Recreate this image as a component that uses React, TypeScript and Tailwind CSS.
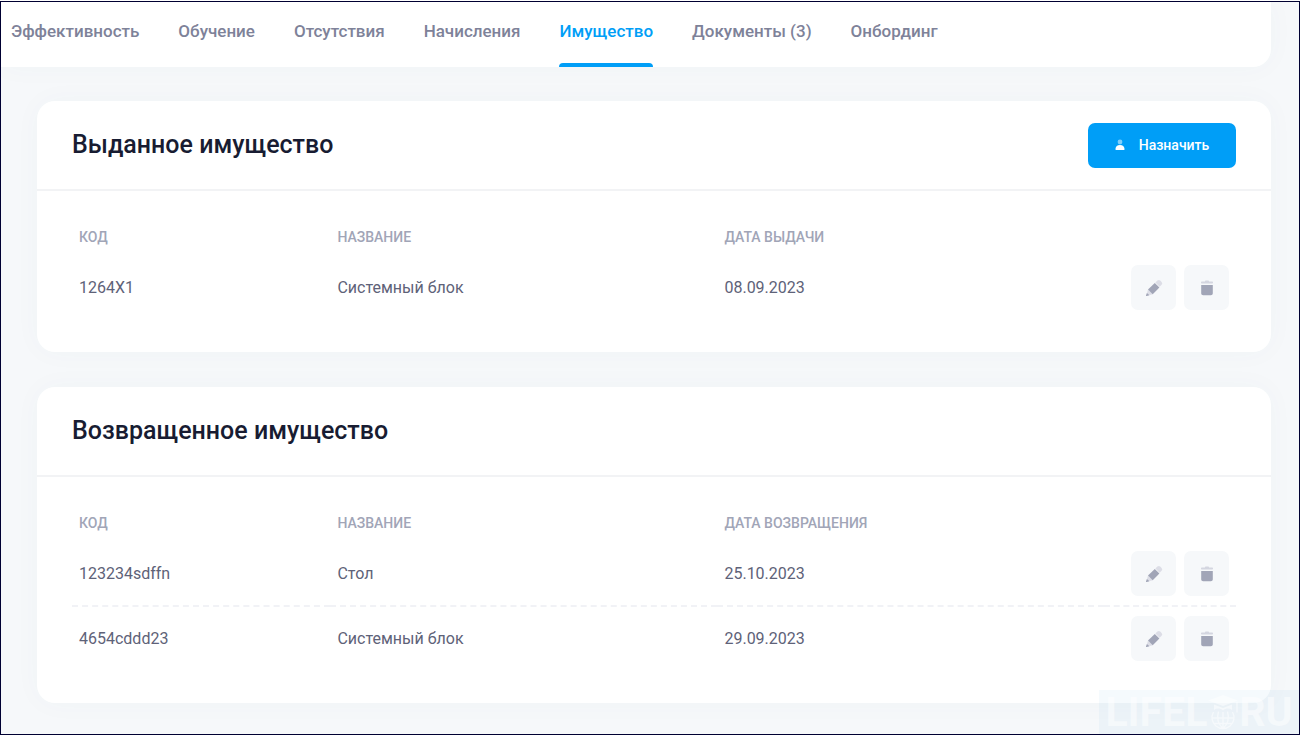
import clsx from 'clsx';

interface Asset {
  code: string;
  name: string;
  date: string;
}

const tabs = ['Эффективность', 'Обучение', 'Отсутствия', 'Начисления', 'Имущество', 'Документы (3)', 'Онбординг'];
const activeTab = 'Имущество';

const issued: Asset[] = [{ code: '1264X1', name: 'Системный блок', date: '08.09.2023' }];

const returned: Asset[] = [
  { code: '123234sdffn', name: 'Стол', date: '25.10.2023' },
  { code: '4654cddd23', name: 'Системный блок', date: '29.09.2023' },
];

function UserIcon() {
  return (
    <svg width="10" height="12" viewBox="0 0 10 12" fill="#fff" aria-hidden="true">
      <circle cx="5" cy="3" r="2.4" opacity="0.5" />
      <path d="M.4 10.200C.6 7.600 2.300 6 5 6s4.400 1.600 4.600 4.200c0 .5-.3.8-.8.8H1.200c-.5 0-.8-.3-.8-.8Z" />
    </svg>
  );
}

function PencilIcon() {
  return (
    <svg width="18" height="18" viewBox="0 0 18 18" aria-hidden="true">
      <path d="M10.400 3.600 12.400 1.600a2 2 0 0 1 2.800 0l1.400 1.400a2 2 0 0 1 0 2.800L14.600 7.800Z" fill="#dcdde6" />
      <path d="M3 10.500 1.200 16.900 7.700 15.200Z" fill="#dcdde6" />
      <path d="M9.800 3.900 14.400 8.500 7.700 15.200 3 10.500Z" fill="#a1a5b7" />
      <path d="M1.900 13.900 1 16.500c-.2.4.1.7.5.6l2.900-.9Z" fill="#a1a5b7" />
    </svg>
  );
}

function TrashIcon() {
  return (
    <svg width="14" height="16" viewBox="0 0 14 16" aria-hidden="true">
      <path d="M5 1.500C5 .9 5.400.5 6 .5h2c.6 0 1 .4 1 1h3c.6 0 1 .4 1 1s-.4 1-1 1H2c-.6 0-1-.4-1-1s.4-1 1-1Z" fill="#d4d6e0" />
      <path d="M1.200 5h11.600v8.200c0 1.200-.8 2-2 2H3.200c-1.200 0-2-.8-2-2Z" fill="#a1a5b7" />
    </svg>
  );
}

function IconButton({ label, children }: { label: string; children: React.ReactNode }) {
  return (
    <button type="button" aria-label={label} className="flex size-[45px] items-center justify-center rounded-[7px] bg-[#f6f8fa]">
      {children}
    </button>
  );
}

function AssetTable({ dateLabel, rows }: { dateLabel: string; rows: Asset[] }) {
  return (
    <table className="w-full table-fixed border-collapse text-left">
      <thead>
        <tr className="h-[38px] text-sm text-[#a1a5b7] uppercase">
          <th className="w-[22.2%] px-[7px] font-medium">Код</th>
          <th className="w-[33.25%] px-[7px] font-medium">Название</th>
          <th className="w-[33.25%] px-[7px] font-medium">{dateLabel}</th>
          <th />
        </tr>
      </thead>
      <tbody className="text-base text-[#5e6278]">
        {rows.map((row, i) => (
          <tr key={row.code} className={clsx(i < rows.length - 1 && 'border-b-2 border-dashed border-[#f1f2f6]')}>
            <td className="px-[7px] py-[9px]">{row.code}</td>
            <td className="px-[7px] py-[9px]">{row.name}</td>
            <td className="px-[7px] py-[9px]">{row.date}</td>
            <td className="px-[7px] py-[9px]">
              <div className="flex justify-end gap-2">
                <IconButton label="Редактировать"><PencilIcon /></IconButton>
                <IconButton label="Удалить"><TrashIcon /></IconButton>
              </div>
            </td>
          </tr>
        ))}
      </tbody>
    </table>
  );
}

function Card({ title, action, children }: { title: string; action?: React.ReactNode; children: React.ReactNode }) {
  return (
    <section className="rounded-[18px] bg-white shadow-[0_0_28px_rgba(60,90,120,0.03)]">
      <header className="flex h-[90px] items-center justify-between border-b-2 border-[#f2f3f5] px-[35px]">
        <h2 className="text-[25px] font-medium text-[#181c32]">{title}</h2>
        {action}
      </header>
      <div className="px-[35px] pt-[27px] pb-[33px]">{children}</div>
    </section>
  );
}

function Watermark() {
  return (
    <div className="absolute right-0 bottom-0 flex h-11 w-[200px] items-center justify-center bg-[#0080c0]/4 text-[41px] leading-none font-bold text-white/50">
      <span>LIFEL</span>
      <svg width="32" height="36" viewBox="0 0 32 36" fill="none" stroke="currentColor" strokeWidth="1.400" aria-hidden="true">
        <path d="M16 1 31 6.500 16 12 1 6.500Z" fill="currentColor" stroke="none" />
        <path d="M7 10.500 16 14l9-3.500v5.500c-3-2-6-2-9 .5-3-2.500-6-2.500-9-.5Z" fill="currentColor" stroke="none" />
        <path d="M30 7.500v11" />
        <path d="M6.500 18a11 11 0 1 0 19 0M11.500 17.500c-1.500 5-1 12 4.500 17M20.500 17.500c1.500 5 1 12-4.500 17M16 18v16.500M5 24h22M7 29.500h18" />
      </svg>
      <span>RU</span>
    </div>
  );
}

export default function App() {
  return (
    <div className="flex min-h-screen flex-col bg-white pt-px font-['Roboto',sans-serif]">
      <div className="relative flex-1 overflow-hidden border border-[#000032] bg-[#f6f8fa]">
        <nav className="mr-7 flex h-[65px] gap-[39px] rounded-br-[18px] bg-white pl-2.5 shadow-[0_0_28px_rgba(60,90,120,0.03)]">
          {tabs.map((tab) => (
            <a
              key={tab}
              href="#"
              className={clsx(
                'relative pt-4 text-[17px] leading-[26px] font-medium whitespace-nowrap',
                tab === activeTab ? 'text-[#009ef7]' : 'text-[#7e8299]',
              )}
            >
              {tab}
              {tab === activeTab && <span className="absolute inset-x-0 bottom-0 h-1 rounded-t-sm bg-[#009ef7]" />}
            </a>
          ))}
        </nav>
        <main className="flex flex-col gap-[35px] pt-[34px] pr-7 pl-9">
          <Card
            title="Выданное имущество"
            action={
              <button type="button" className="flex h-[45px] w-[148px] items-center justify-center gap-3.5 rounded-[7px] bg-[#009ef7] text-sm font-medium text-white">
                <UserIcon />
                Назначить
              </button>
            }
          >
            <AssetTable dateLabel="Дата выдачи" rows={issued} />
          </Card>
          <Card title="Возвращенное имущество">
            <AssetTable dateLabel="Дата возвращения" rows={returned} />
          </Card>
        </main>
        <Watermark />
      </div>
    </div>
  );
}
